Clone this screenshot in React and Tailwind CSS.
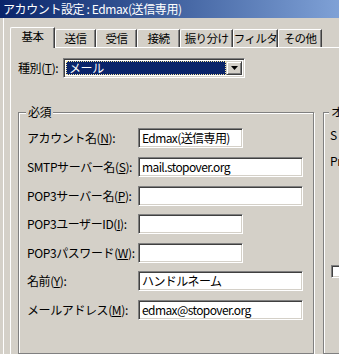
import React from 'react';

const font = { fontFamily: '"Noto Sans CJK JP", "Noto Sans", sans-serif' };

const tabs = [
  { label: '基本', w: 'w-[45px]', active: true },
  { label: '送信', w: 'w-[41px]' },
  { label: '受信', w: 'w-[41px]' },
  { label: '接続', w: 'w-[43px]' },
  { label: '振り分け', w: 'w-[53px]' },
  { label: 'フィルタ', w: 'w-[45px]' },
  { label: 'その他', w: 'w-[44px]' },
];

const Field = ({ label, keyChar, value, wide, mt }) => {
  const [before, after] = label;
  return (
    <div className={`flex items-center h-[20px] ${mt}`}>
      <div className="w-[111px] text-[12px] leading-none text-black whitespace-nowrap">
        {before}(<span className="underline">{keyChar}</span>){after}
      </div>
      <div
        className={`${wide ? 'w-[165px]' : 'w-[105px]'} h-[20px] bg-white border border-t-[#808080] border-l-[#808080] border-b-white border-r-white shadow-[inset_1px_1px_0_#404040,inset_-1px_-1px_0_#d4d0c8] flex items-center pl-[3px] text-[12px] tracking-[-0.6px] leading-none text-black whitespace-nowrap overflow-hidden`}
      >
        {value}
      </div>
    </div>
  );
};

const App = () => {
  return (
    <div className="w-[339px] h-[354px] bg-[#d4d0c8] overflow-hidden flex flex-col tracking-[-0.4px]" style={font}>
      {/* title bar */}
      <div className="h-[18px] shrink-0 bg-gradient-to-r from-[#0a246a] to-[#7fa1d6] flex items-center pl-[3px] text-white text-[12px] leading-none whitespace-nowrap">
        アカウント設定 : Edmax(送信専用)
      </div>

      <div className="flex-1 pl-[3px] flex">
        <div className="flex-1 border-l border-white pl-[6px] pt-[9px] flex flex-col">
          {/* tabs */}
          <div className="flex items-end h-[20px] relative z-10">
            {tabs.map((t) => (
              <div
                key={t.label}
                className={`${t.w} shrink-0 flex items-center justify-center text-[11.5px] tracking-[-0.6px] leading-none text-black whitespace-nowrap bg-[#d4d0c8] border-t border-l border-white border-r border-r-[#404040] shadow-[inset_-1px_0_0_#808080] rounded-tl-[2px] ${
                  t.active ? 'h-[21px] -mb-px pb-[2px]' : 'h-[18px] pt-[1px]'
                }`}
              >
                {t.label}
              </div>
            ))}
          </div>

          {/* tab page */}
          <div className="flex-1 w-[420px] border-t border-l border-white pl-[7px] pt-[10px] flex flex-col">
            <div className="flex items-center h-[20px]">
              <div className="w-[45px] text-[12px] leading-none text-black whitespace-nowrap">
                種別(<span className="underline">T</span>):
              </div>
              <div className="w-[182px] h-[20px] bg-white border border-t-[#808080] border-l-[#808080] border-b-white border-r-white shadow-[inset_1px_1px_0_#404040,inset_-1px_-1px_0_#d4d0c8] flex items-center p-[2px]">
                <div className="flex-1 h-full bg-[#0a246a] outline outline-1 outline-dotted outline-[#f5e6a0] -outline-offset-1 flex items-center pl-[3px] text-white text-[12px] leading-none">
                  メール
                </div>
                <div className="w-[16px] h-full bg-[#d4d0c8] border border-t-[#d4d0c8] border-l-[#d4d0c8] border-b-[#404040] border-r-[#404040] shadow-[inset_1px_1px_0_#fff,inset_-1px_-1px_0_#808080] flex items-center justify-center">
                  <svg width="7" height="4" viewBox="0 0 7 4">
                    <path d="M0 0h7L3.5 4z" fill="#000" />
                  </svg>
                </div>
              </div>
            </div>

            <div className="flex mt-[34px] flex-1">
              {/* required group */}
              <div className="relative w-[296px] border border-[#808080] shadow-[inset_1px_1px_0_#fff,1px_1px_0_#fff] pl-[8px] pt-[15px] flex flex-col">
                <span className="absolute -top-[8px] left-[7px] px-[2px] bg-[#d4d0c8] text-[12px] leading-[14px] text-black">
                  必須
                </span>
                <Field label={['アカウント名', ':']} keyChar="N" value="Edmax(送信専用)" />
                <Field label={['SMTPサーバー名', ':']} keyChar="S" value="mail.stopover.org" wide mt="mt-[9px]" />
                <Field label={['POP3サーバー名', ':']} keyChar="P" value="" wide mt="mt-[9px]" />
                <Field label={['POP3ユーザーID', ':']} keyChar="I" value="" mt="mt-[8px]" />
                <Field label={['POP3パスワード', ':']} keyChar="W" value="" mt="mt-[9px]" />
                <Field label={['名前', ':']} keyChar="Y" value="ハンドルネーム" wide mt="mt-[8px]" />
                <Field label={['メールアドレス', ':']} keyChar="M" value="edmax@stopover.org" wide mt="mt-[9px]" />
              </div>

              {/* options group (cut off at the window edge) */}
              <div className="relative ml-[9px] w-[80px] border border-[#808080] shadow-[inset_1px_1px_0_#fff,1px_1px_0_#fff] pl-[6px] pt-[16px] flex flex-col text-[12px] leading-none text-black">
                <span className="absolute -top-[8px] left-[5px] px-[2px] bg-[#d4d0c8] leading-[14px]">
                  オ
                </span>
                <div>S</div>
                <div className="mt-[14px]">Pr</div>
                <div className="mt-[98px] ml-[1px] w-[13px] h-[13px] bg-white border border-t-[#808080] border-l-[#808080] border-b-white border-r-white shadow-[inset_1px_1px_0_#404040,inset_-1px_-1px_0_#d4d0c8]" />
              </div>
            </div>
          </div>
        </div>
      </div>
    </div>
  );
};

export default App;
